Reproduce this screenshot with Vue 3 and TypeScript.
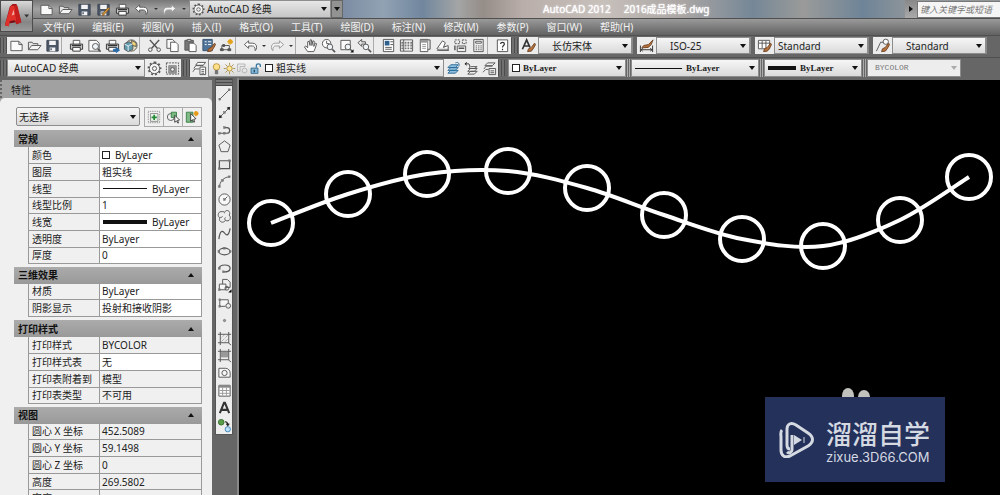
<script setup lang="ts">
interface Row { name: string; value: string; mark?: 'swatch' | 'thin' | 'thick'; locked?: boolean }
interface Section { title: string; rows: Row[] }
interface Point { x: number; y: number }

const page = '<path fill="#fafafa" d="M2 3.500h8.500l3.500 3.500v6.500H2z"/><path d="M10.500 3.500V7H14"/>'
const folder = '<path fill="#e4e4e4" d="M1.500 12.500V4.500h4l1 1.500h5v2"/><path fill="#f5f5f5" d="M1.500 12.500L5 8h10l-3.500 4.500z"/>'
const floppy = '<path fill="#4b5666" stroke="#3c4552" d="M2 2.500h12v11.500H2z"/><path fill="#f4f4f4" stroke="none" d="M4.500 3h7v4.500h-7zM5 10h6v4H5z"/><path stroke="#4b5666" stroke-width="1.500" d="M6.500 11v2"/>'
const printer = '<path fill="#fff" d="M4.500 6.500v-4h7v4"/><path fill="#cfcfcf" stroke="#333" d="M1.500 6.500h13v5.500h-13z"/><path fill="#fff" stroke="#333" d="M4 10h8v4H4z"/><path stroke="#333" stroke-width="1.500" d="M3 8h10"/>'
const undo = '<path fill="#fff" d="M1.500 7L6 3v2.500h4c3 0 4.500 2 4.500 4.500 0 1.500-.5 2.500-1.500 3.500C13 10 12 8.500 10 8.500H6V11z"/>'
const redo = '<path fill="#f4f4f4" stroke="#999" d="M14.500 7L10 3v2.500H6C3 5.500 1.500 7.500 1.500 10c0 1.500.5 2.500 1.500 3.500C3 10 4 8.500 6 8.500h4V11z"/>'
const gear = '<circle cx="8" cy="8" r="5.500" fill="#f3f3f3"/><circle cx="8" cy="8" r="2.200"/><path stroke-width="1.800" stroke-dasharray="2 2.300" d="M8 1.500a6.500 6.500 0 1 1 0 13a6.500 6.500 0 1 1 0-13"/>'
const brush = '<path fill="#b7713a" stroke="#704528" d="M14.500 5.500L11 10l-3 1.500-1 3 4-.5 2-2.500 2.500-4.500z"/>'
const lens = '<circle cx="9" cy="9" r="3.200" fill="#eef4f8"/><path stroke-width="1.800" d="M11.500 11.500l3 3"/>'
const layers = '<path fill="#eee" d="M2 12l3-4h9l-3 4zM2 9l3-4h9l-3 4zM3 6l3-4h8l-3 4z"/>'
const nodeDot = (x: number, y: number) => `<rect x="${x - 1}" y="${y - 1}" width="2" height="2" fill="#777" stroke="#777" stroke-width=".5"/>`

const icons: Record<string, string> = {
  page, folder, floppy, printer, undo, redo, gear,
  saveAs: floppy + '<path fill="#e0a33c" stroke="#8a5a20" d="M14.500 7L9 13l-2 2 .5-3L13 6z"/>',
  preview: '<path fill="#fafafa" d="M2 2.500h8l3 3v8.500H2z"/>' + lens,
  publish: printer + '<path fill="#2b6ca8" stroke="#2b6ca8" d="M9 12h3v-2l3.500 3-3.500 2.500V14H9z"/>',
  cube: '<circle cx="9" cy="8" r="6" fill="#e9e4c8"/><path fill="#5c9bb0" d="M1.500 6l5-2 4 2v6l-5 2.500-4-2.500z"/><path fill="#f1d372" d="M9 2.500l5 2.500v4l-4-1z"/><path stroke="#eee" d="M1.500 6.500l4 2 5-2.500M5.500 8.500V14"/>',
  cut: '<path stroke-width="1.600" d="M3 2l8 9M13 2L5 11"/><circle cx="3.500" cy="12.500" r="1.900"/><circle cx="12.500" cy="12.500" r="1.900"/>',
  copy: '<path fill="#f7f7f7" d="M2 1.500h6l2 2V11H2z"/><path fill="#fff" d="M6 4.500h5.500l2.500 2.500v7.500H6z"/>',
  paste: '<path fill="#777" d="M2 2.500h9V13H2z"/><path fill="#ddd" d="M4.500 1.500h4v2h-4z"/><path fill="#fff" d="M6.500 5.500h5L14 8v6.500H6.500z"/>',
  match: '<path fill="#4f7499" stroke="#34506e" d="M2 1.500h10v12H2z"/><path stroke="#fff" d="M4 4h2M7.500 4H11M4 7h2M7.500 7H11"/>' + brush,
  block: '<path d="M3 12.500V8h8v4.500z"/><path fill="#555" d="M1.500 11.500h3v2h-3zM9.500 11.500h3v2h-3zM4 7h2v2H4z"/><path stroke="#e3a21a" stroke-width="1.500" d="M12 1v6M9 4h6M10 2l4 4M14 2l-4 4"/>',
  pan: '<path fill="#fff" d="M5 14.500L1.500 9.500 3 8.500l2 2V4l1.500-.5L7.500 8V2L9 2l.5 6 1-5 1.500.5-.5 5.500 1.500-3.500 1.500.5-1.500 5-1.500 3.500z"/>',
  zoomTime: '<circle cx="6" cy="6" r="4.500" fill="#fff"/><path d="M6 3v3h3"/><circle cx="9.500" cy="9.500" r="3" fill="#eef4f8"/><path stroke-width="1.800" d="M12 12l3 3"/>',
  zoomWin: '<path fill="#fafafa" d="M2 2.500h10v10H2z"/><circle cx="9.500" cy="9.500" r="3" fill="#eef4f8"/><path stroke-width="1.500" d="M12 12l2 2"/><path fill="#111" stroke="none" d="M15.500 12v3.500H12z"/>',
  zoomPrev: '<path fill="#e5e5e5" d="M1 5l4-3.500V4h4v2.500H5V9z"/><circle cx="9.500" cy="9.500" r="3" fill="#eef4f8"/><path stroke-width="1.800" d="M12 12l3 3"/>',
  props: '<path fill="#fff" d="M2.500 1.500h11v13h-11z"/><path fill="#2d608e" stroke="none" d="M4 3h5v5H4z"/><path d="M10 4h3M10 7h3M4.500 10h7M4.500 12h7"/>',
  center: '<path fill="#fff" d="M1.500 2h13v12h-13z"/><path d="M5 2v12"/><path stroke-width="2" stroke="#777" stroke-dasharray="2 1" d="M6 5h8M6 8h8M6 11h8M2.500 5h2M2.500 8h2M2.500 11h2"/>',
  palette: '<path fill="#fff" d="M3.500 1.500h8v13h-8z"/><path fill="#ddd" d="M11.500 2H14v10h-2.500"/><path fill="#999" stroke="none" d="M4 2h7v3H4z"/><path stroke="#999" d="M5.500 7h4M5.500 9h4M5.500 11h4"/>',
  sheet: '<path fill="#ddd" d="M2 11l4-2 8 1v3H4z"/><path fill="#fff" d="M3 10l5-7 3 2-2 5 5-2v3"/><path d="M2 13h13"/>',
  markup: '<path stroke-dasharray="2 1" d="M2 2h5v4H2zM10 2h4v4h-4z"/><path fill="#eee" d="M4.500 8.500h9v6h-9z"/><path stroke-width="1.500" d="M6 11h6M2 8v5"/>',
  calc: '<path fill="#eee" d="M3 1.500h10v13H3z"/><path fill="#fff" d="M5 3.500h6v2H5z"/><path stroke="#888" stroke-width="1.300" stroke-dasharray="1.500 1" d="M5 8.500h7M5 10.500h7M5 12.500h7"/>',
  help: '<path fill="#fff" d="M2.500 2h11v12.500h-11z"/><path stroke="#333" stroke-width="1.300" d="M6 6.500C6 4 10 4 10 6.500 10 8 8 8 8 10M8 11.500V13"/>',
  textStyle: '<path stroke="#333" stroke-width="1.800" d="M1.500 12L6 2l3.500 8M3.500 8.500h5"/>' + brush,
  dimStyle: '<path stroke="#333" d="M1.500 8v7M14.500 8v7M2 12.500h12M4 11l-2 1.500L4 14M12 11l2 1.500L12 14"/><path fill="#b7713a" stroke="#704528" d="M15 2l-5 5-5 1-2 2.500 7-.5 3-3z"/>',
  tableStyle: '<path fill="#fff" d="M1.500 2.500h12v9h-12zM1.500 5.500h12M5.500 3v8M9.500 3v8"/>' + brush,
  leaderStyle: '<path d="M1.500 14L6 4.500h3"/><circle cx="11.500" cy="4" r="2.800" fill="#fff"/>' + brush,
  wsGear: gear,
  wsSave: '<path stroke-dasharray="2 1" d="M1.500 2h13v12h-13z"/><path fill="#999" stroke="#888" d="M4 5h8v8H4z"/><circle cx="8" cy="9" r="2" fill="#eee"/>',
  layerProps: '<path fill="#fff" d="M4 4.500L6 1.500h8.500L12 4.500zM2 8l2-3h8M1 11.500l2-3h5M8.500 6.500h6v8h-6z"/><path d="M10 9h3M10 11h3M10 13h3"/>',
  bulb: '<circle cx="8" cy="6" r="4" fill="#ffe08a" stroke="#b58a2c"/><path fill="#777" stroke="#666" d="M6.500 10.500h3v4h-3z"/>',
  sun: '<circle cx="8" cy="8" r="3.300" fill="#ffe795" stroke="#a18233"/><path stroke="#a18233" d="M8 1v2.500M8 12.500V15M1 8h2.500M12.500 8H15M3 3l2 2M11 11l2 2M13 3l-2 2M5 11l-2 2"/>',
  viewport: '<path stroke="#aaa" fill="#eee" d="M2 2.500h9v3H5v6H2z"/><circle cx="10.500" cy="10.500" r="3" stroke="#aaa"/>',
  lock: '<path stroke="#37769e" stroke-width="1.500" d="M9 7V4.500C9 1.500 14 1.500 14 4.500V6"/><path fill="#83b5d3" stroke="#2d6389" d="M2.500 7.500h8.500v6.500H2.500z"/><path stroke="#1c4763" stroke-width="1.500" d="M6.500 9.500v3"/>',
  layerCur: '<path fill="#8fc0e0" stroke="#2c6a96" d="M2 13l3-3h8l-3 3zM2 10l3-3h8l-3 3zM2 7l3-3h8l-3 3z"/><path stroke="#2c6a96" d="M10 2c3-1.500 5 1 3.500 4"/>',
  layerPrev: '<path fill="#eee" d="M4 14l3-3h7l-3 3zM4 11l3-3h7l-3 3zM5 8l2-2h7l-3 2z"/><path stroke="#222" d="M1 3h3c2 0 2 1 2 3M1 3l2-1.500M1 3l2 1.500"/>',
  layerState: '<path fill="#eee" d="M3 5l3-3h8l-3 3zM2 8.500l2.500-3H11M1 12l3-3h3M7.500 8h7v6.500h-7z"/><path d="M9 10.500h4M9 12.500h4"/>',
  quick: '<path stroke="#777" stroke-dasharray="1 1" d="M1.500 1.500h13v13h-13z"/><path fill="#e9f4e9" stroke="#888" d="M4 4h8.500v9H4z"/><path stroke="#238a37" stroke-width="2" d="M8.200 5.500v6M5.200 8.500h6"/>',
  pick: '<circle cx="5.500" cy="8" r="4"/><path fill="#79b982" stroke="#367c43" d="M6 2.500h6v6H6z"/><path fill="#fff" stroke="#333" d="M10 6v8l2-1.500 1.500 2.500 1-.5L13 12l2.500-.5z"/>',
  filter: '<path fill="#7fb986" stroke="#367c43" d="M1.500 2.500H9V14H1.500z"/><path fill="#fff" stroke="#333" d="M6.500 4v9l2-2 1.500 3 1-.5-1-3 2.500-.5z"/><path stroke="#e59a18" stroke-width="1.500" d="M12.500 1v6M10 4h5.500M11 2l3.500 4M14.500 2L11 6"/>',
}

const drawTools: { id: string; label: string; art: string }[] = [
  { id: 'line', label: '直线', art: '<path d="M3 13L13 3"/>' + nodeDot(3, 13) + nodeDot(13, 3) },
  { id: 'xline', label: '构造线', art: '<path d="M2.500 13.500l11-11"/><path fill="#222" stroke="#222" d="M13.500 2.500l-2.500.5 2 2zM2.500 13.500l2.500-.5-2-2z"/>' + nodeDot(8, 8) },
  { id: 'pline', label: '多段线', art: '<path stroke-width="1.300" d="M2.500 12h8c4 0 4-6 0-6H8"/>' + nodeDot(2.500, 12) + nodeDot(8, 6) + nodeDot(8, 12) },
  { id: 'polygon', label: '多边形', art: '<path fill="#eee" d="M8 2l6 4.500-2.300 7H4.300L2 6.500z"/>' },
  { id: 'rect', label: '矩形', art: '<path fill="#e8e8e8" stroke-width="1.300" d="M2.500 4h11v8.500h-11z"/>' + nodeDot(2.500, 12.500) + nodeDot(13.500, 4) },
  { id: 'arc', label: '圆弧', art: '<path d="M2.500 14C3 8 7 3.500 13 3"/>' + nodeDot(2.500, 13.500) + nodeDot(6, 7) + nodeDot(13, 3) },
  { id: 'circle', label: '圆', art: '<circle cx="8" cy="8" r="6" fill="#f7f7f7"/><path d="M8 8l3-3"/>' + nodeDot(8, 8) },
  { id: 'cloud', label: '修订云线', art: '<path d="M8 3.500C10-.5 15.500 2.500 13 6.500c3 3 0 8-4 5.500-2 4-8 1.500-6-2.500C-.5 7 2 1.500 5.500 3 6.500 2 8 3 8 4.500M9 12c-1-1-1-2 0-3M6 8C5 9 4 9 3 9"/>' },
  { id: 'spline', label: '样条曲线', art: '<path stroke-width="1.300" d="M2 14C3.500 2 7 6 8.500 8s4 3 5.500-5.500"/>' },
  { id: 'ellipse', label: '椭圆', art: '<ellipse cx="8" cy="8" rx="6" ry="3.500" stroke-width="1.300"/>' + nodeDot(2, 8) + nodeDot(14, 8) + nodeDot(8, 4.500) },
  { id: 'earc', label: '椭圆弧', art: '<path stroke-width="1.300" d="M2 8c1-5 12-5 12 0 0 3-4 4-7 3.500"/>' + nodeDot(7, 11.500) + nodeDot(2.500, 8) },
  { id: 'insert', label: '插入块', art: '<path fill="#eee" d="M6 1.500h5l3 3V10H6z"/><path fill="#f7f7f7" d="M2.500 12.500v-6h7v6z"/><circle cx="10.500" cy="11" r="2"/>' + nodeDot(2.500, 12.500) + '<path fill="#000" stroke="none" d="M15.500 12v3.500H12z"/>' },
  { id: 'make', label: '创建块', art: '<path fill="#f7f7f7" d="M3 11V4h9v4M3 11h6"/><circle cx="12" cy="10.500" r="2.500"/>' + nodeDot(3, 11) + nodeDot(3, 4) },
  { id: 'point', label: '点', art: '<circle cx="8" cy="8" r="1.200" fill="#999" stroke="#777"/>' },
  { id: 'hatch', label: '图案填充', art: '<path stroke="#888" stroke-dasharray="1 1" d="M4 8l4-4M4 12l8-8M8 12l4-4"/><path d="M3.500 1v14M12.500 1v12M1 3.500h14M1 12.500h11l3 2.500"/>' },
  { id: 'gradient', label: '渐变色', art: '<path fill="#999" stroke="none" d="M4 4h8v6H4z"/><path d="M3.500 1v14M12.500 1v12M1 3.500h14M1 12.500h11l3 2.500"/>' },
  { id: 'region', label: '面域', art: '<path fill="#f7f7f7" d="M2 13V3.500h7c3 0 5 2.500 5 5V13z"/><circle cx="8" cy="8.500" r="2.800"/>' },
  { id: 'table', label: '表格', art: '<path fill="#fff" d="M2 2.500h12v11.500H2z"/><path fill="#888" stroke="none" d="M2 2h12v3H2z"/><path stroke="#999" d="M2.500 8h11M2.500 11h11M6 5v8.500M10 5v8.500"/>' },
  { id: 'mtext', label: '多行文字', art: '<path stroke="#333" stroke-width="2.200" d="M3 14L7.500 3h1L13 14M4.500 10.500h7"/>' },
  { id: 'addsel', label: '添加选定对象', art: '<circle cx="4.500" cy="4.500" r="3" fill="#5a9e4b" stroke="#3a7030"/><circle cx="11.500" cy="12" r="2.800" fill="#bfe0f7" stroke="#3c86bd"/><path stroke="#222" stroke-width="1.300" d="M8.500 4c2 0 3 1 3 3.500M10 6l1.500 2L13 6"/>' },
]

const menus = ['文件(F)', '编辑(E)', '视图(V)', '插入(I)', '格式(O)', '工具(T)', '绘图(D)', '标注(N)', '修改(M)', '参数(P)', '窗口(W)', '帮助(H)']
const quickTools = ['page', 'folder', 'floppy', 'saveAs', 'printer', 'undo', 'caret', 'redo', 'caret']
const standardGroups = [
  ['page', 'folder', 'floppy'],
  ['printer', 'preview', 'publish', 'cube'],
  ['cut', 'copy', 'paste', 'match', 'block'],
  ['undo', 'caret', 'redo', 'caret'],
  ['pan', 'zoomTime', 'zoomWin', 'zoomPrev'],
  ['props', 'center', 'palette', 'sheet', 'markup', 'calc'],
  ['help'],
]
const styleBoxes = [
  { icon: 'textStyle', label: '文字样式', value: '长仿宋体', indent: 'far' },
  { icon: 'dimStyle', label: '标注样式', value: 'ISO-25', indent: 'far' },
  { icon: 'tableStyle', label: '表格样式', value: 'Standard', indent: 'near' },
  { icon: 'leaderStyle', label: '多重引线样式', value: 'Standard', indent: 'far' },
]

const sections: Section[] = [
  { title: '常规', rows: [
    { name: '颜色', value: 'ByLayer', mark: 'swatch' },
    { name: '图层', value: '粗实线' },
    { name: '线型', value: 'ByLayer', mark: 'thin' },
    { name: '线型比例', value: '1' },
    { name: '线宽', value: 'ByLayer', mark: 'thick' },
    { name: '透明度', value: 'ByLayer' },
    { name: '厚度', value: '0' },
  ] },
  { title: '三维效果', rows: [
    { name: '材质', value: 'ByLayer' },
    { name: '阴影显示', value: '投射和接收阴影' },
  ] },
  { title: '打印样式', rows: [
    { name: '打印样式', value: 'BYCOLOR', locked: true },
    { name: '打印样式表', value: '无' },
    { name: '打印表附着到', value: '模型', locked: true },
    { name: '打印表类型', value: '不可用', locked: true },
  ] },
  { title: '视图', rows: [
    { name: '圆心 X 坐标', value: '452.5089', locked: true },
    { name: '圆心 Y 坐标', value: '59.1498', locked: true },
    { name: '圆心 Z 坐标', value: '0', locked: true },
    { name: '高度', value: '269.5802', locked: true },
    { name: '宽度', value: '', locked: true },
  ] },
]

const nodes: Point[] = [
  { x: 32, y: 143 }, { x: 109, y: 114 }, { x: 188, y: 94 }, { x: 269, y: 91 }, { x: 348, y: 108 },
  { x: 425, y: 135 }, { x: 503, y: 159 }, { x: 584, y: 166 }, { x: 661, y: 140 }, { x: 730, y: 97 },
]

/* Catmull-Rom spline through the points, written as cubic segments. */
function splinePath(pts: Point[]): string {
  let d = `M${pts[0].x} ${pts[0].y}`
  for (let i = 0; i < pts.length - 1; i++) {
    const a = pts[Math.max(i - 1, 0)]
    const b = pts[i]
    const c = pts[i + 1]
    const e = pts[Math.min(i + 2, pts.length - 1)]
    d += ` C${b.x + (c.x - a.x) / 6} ${b.y + (c.y - a.y) / 6} ${c.x - (e.x - b.x) / 6} ${c.y - (e.y - b.y) / 6} ${c.x} ${c.y}`
  }
  return d
}
const curve = splinePath(nodes)
</script>

<template>
  <div class="app">
    <header class="top">
      <button class="logo" aria-label="应用程序菜单">
        <svg viewBox="0 0 32 31">
          <path fill="#a01318" d="M4 25L9 6l3-3h4l5 19-5 2-2-4-5 1-1 5z" />
          <path fill="#e0302a" d="M4 25L10 5h4l2 17-2-2-5 1-1 5z" />
          <path fill="#c41d1d" d="M14 4l3 1 4 17-5 2z" />
          <path fill="#f4aaa4" d="M11 15l2-6 1 5z" />
          <path fill="#7a0d10" d="M9 21l5-1 1 2-6 1z" />
          <path fill="#333" d="M24 14h5l-2.500 3z" />
        </svg>
      </button>
      <div class="top-rows">
        <div class="titlebar">
          <div class="quick">
            <template v-for="(q, i) in quickTools" :key="i">
              <button v-if="q === 'caret'" class="caret" aria-label="更多"></button>
              <button v-else class="tool" :aria-label="q"><svg viewBox="0 0 16 16" v-html="icons[q]"></svg></button>
            </template>
          </div>
          <label class="combo workspace">
            <svg class="ico" viewBox="0 0 16 16" v-html="icons.gear"></svg>
            <select aria-label="工作空间"><option>AutoCAD 经典</option></select>
          </label>
          <button class="more" aria-label="自定义快速访问工具栏"></button>
          <h1 class="title"><span>AutoCAD 2012</span><span>2016成品模板.dwg</span></h1>
          <button class="reveal" aria-label="展开搜索"></button>
          <input class="search" type="text" aria-label="搜索" placeholder="键入关键字或短语">
        </div>
        <nav class="menubar">
          <button v-for="m in menus" :key="m">{{ m }}</button>
        </nav>
      </div>
    </header>

    <div class="bar">
      <i class="grip"></i>
      <div class="strip standard">
        <div v-for="(g, gi) in standardGroups" :key="gi" class="group">
          <template v-for="(q, i) in g" :key="i">
            <button v-if="q === 'caret'" class="caret" aria-label="更多"></button>
            <button v-else class="tool" :aria-label="q"><svg viewBox="0 0 16 16" v-html="icons[q]"></svg></button>
          </template>
        </div>
      </div>
      <i class="grip wide"></i>
      <div v-for="s in styleBoxes" :key="s.icon" class="strip style-box">
        <button class="tool" :aria-label="s.label"><svg viewBox="0 0 16 16" v-html="icons[s.icon]"></svg></button>
        <label class="combo" :class="s.indent">
          <select :aria-label="s.label"><option>{{ s.value }}</option></select>
        </label>
      </div>
    </div>

    <div class="bar second">
      <i class="grip"></i>
      <div class="strip">
        <label class="combo ws"><select aria-label="当前工作空间"><option>AutoCAD 经典</option></select></label>
        <button class="tool" aria-label="工作空间设置"><svg viewBox="0 0 16 16" v-html="icons.wsGear"></svg></button>
        <button class="tool" aria-label="我的工作空间"><svg viewBox="0 0 16 16" v-html="icons.wsSave"></svg></button>
      </div>
      <i class="grip spaced"></i>
      <div class="strip">
        <button class="tool" aria-label="图层特性"><svg viewBox="0 0 16 16" v-html="icons.layerProps"></svg></button>
        <label class="combo layer">
          <svg v-for="n in ['bulb', 'sun', 'viewport', 'lock']" :key="n" class="ico" viewBox="0 0 16 16" v-html="icons[n]"></svg>
          <i class="swatch"></i>
          <select aria-label="图层"><option>粗实线</option></select>
        </label>
        <button v-for="n in ['layerCur', 'layerPrev', 'layerState']" :key="n" class="tool" :aria-label="n">
          <svg viewBox="0 0 16 16" v-html="icons[n]"></svg>
        </button>
      </div>
      <i class="grip"></i>
      <label class="combo serif color"><i class="swatch"></i><select aria-label="颜色控制"><option>ByLayer</option></select></label>
      <i class="sep"></i>
      <label class="combo serif ltype"><i class="rule thin"></i><select aria-label="线型控制"><option>ByLayer</option></select></label>
      <i class="sep"></i>
      <label class="combo serif weight"><i class="rule thick"></i><select aria-label="线宽控制"><option>ByLayer</option></select></label>
      <i class="sep"></i>
      <label class="combo plot"><select aria-label="打印样式控制" disabled><option>BYCOLOR</option></select></label>
    </div>

    <main class="work">
      <aside class="palette">
        <h2>特性</h2>
        <div class="palette-body">
          <div class="selector">
            <label class="combo"><select aria-label="选择对象类型"><option>无选择</option></select></label>
            <div class="pick-buttons">
              <button v-for="n in ['quick', 'pick', 'filter']" :key="n" :aria-label="n">
                <svg viewBox="0 0 16 16" v-html="icons[n]"></svg>
              </button>
            </div>
          </div>
          <section v-for="s in sections" :key="s.title">
            <h3><button>{{ s.title }}</button></h3>
            <table>
              <tbody>
                <tr v-for="r in s.rows" :key="r.name">
                  <th scope="row">{{ r.name }}</th>
                  <td :class="{ locked: r.locked }">
                    <div class="value">
                      <i v-if="r.mark === 'swatch'" class="swatch"></i>
                      <i v-else-if="r.mark" class="rule" :class="r.mark"></i>
                      <span>{{ r.value }}</span>
                    </div>
                  </td>
                </tr>
              </tbody>
            </table>
          </section>
        </div>
      </aside>

      <div class="draw-dock">
        <div class="draw-bar">
          <i class="hgrip"></i>
          <div class="draw-tools">
            <button v-for="t in drawTools" :key="t.id" :aria-label="t.label">
              <svg viewBox="0 0 16 16" v-html="t.art"></svg>
            </button>
          </div>
        </div>
      </div>

      <div class="canvas">
        <svg class="drawing" viewBox="0 0 761 415" preserveAspectRatio="xMinYMin meet">
          <path :d="curve" />
          <circle v-for="(n, i) in nodes" :key="i" :cx="n.x" :cy="n.y" r="22" />
        </svg>
        <div class="watermark">
          <svg class="ears" viewBox="0 0 32 9"><ellipse cx="7" cy="8" rx="6" ry="8" /><ellipse cx="23" cy="9" rx="6" ry="7" /></svg>
          <svg class="mark" viewBox="0 0 36 36">
            <path d="M8 30a3 3 0 0 0 5-2V13" />
            <path d="M3 8C1 10 2 13 2 15v13c0 6 4 8 9 6l18-10c6-4 6-9 0-13L17 3C12 0 8 2 8 7v16c0 3 1 4 3 4" />
            <path class="solid" d="M15 13l8 5-8 5z" />
            <path class="fine" d="M25 15v6" />
          </svg>
          <div class="brand"><strong>溜溜自学</strong><span>zixue.3D66.COM</span></div>
        </div>
      </div>
    </main>
  </div>
</template>

<style>
html, body, #app { height: 100%; }
body { margin: 0; overflow: hidden; }
</style>

<style scoped>
.app {
  --face: "Noto Sans", "Noto Sans CJK SC", sans-serif;
  height: 100%;
  display: flex;
  flex-direction: column;
  overflow: hidden;
  background: #666;
  color: #222;
  font: 10px/14px var(--face);
}
.app * { box-sizing: border-box; }
button { margin: 0; padding: 0; border: 0; background: none; color: inherit; font: inherit; }
svg { display: block; fill: none; stroke: #555; stroke-width: 1; }
h1, h2, h3 { margin: 0; font: inherit; }

.top { flex: none; display: flex; height: 35px; background: linear-gradient(#5f5f5f 0, #929292 54%, #999 55%, #626262); }
.logo { width: 33px; height: 32px; border: 1px solid #4c4c4c; background: linear-gradient(#d9d9d9, #858585 70%, #9c9c9c); }
.logo svg { width: 31px; height: 30px; stroke: none; }
.top-rows { flex: 1; min-width: 0; display: flex; flex-direction: column; }
.titlebar {
  display: flex;
  height: 19px;
  border-bottom: 1px solid #505050;
  background: linear-gradient(90deg, #7c8da3 310px, #91a2b3 350px, #71879e 390px, #a3a5a5 425px, #958d88 450px, #b9aeaa 490px, #c7c0bb 570px, #aaa5a3 650px, #758797 720px, #9a9b99 770px, #6e8498 830px, #92979a 880px);
}
.quick { display: flex; align-items: center; width: 156px; padding-left: 4px; background: linear-gradient(#777, #a2a2a2 50%, #858585); }
.tool { flex: none; width: 18px; display: flex; justify-content: center; align-items: center; }
.tool svg { width: 15px; height: 15px; }
.quick .tool { width: 19px; }
.caret { flex: none; width: 9px; display: flex; justify-content: center; align-items: center; }
.caret::before { content: ""; border: 2px solid transparent; border-top-color: #333; border-bottom: 0; }
.combo {
  flex: none;
  display: flex;
  align-items: center;
  padding: 0 3px 0 7px;
  border: 1px solid #8d8d8d;
  background: linear-gradient(#f6f6f6, #dadada);
}
.combo::after { content: ""; flex: none; border: 3px solid transparent; border-top: 4px solid #111; border-bottom: 0; pointer-events: none; }
select { flex: 1; min-width: 0; appearance: none; margin: 0; padding: 0; border: 0; background: transparent; color: #222; font: inherit; }
.ico { flex: none; width: 13px; height: 13px; }
.workspace { width: 142px; padding-left: 2px; background: linear-gradient(#e6e6e6, #c6c6c6); }
.workspace .ico { margin-right: 2px; }
.more { width: 12px; display: flex; justify-content: center; align-items: center; border: 1px solid #666; background: #929292; }
.more::before { content: ""; border: 3px solid transparent; border-top: 4px solid #111; border-bottom: 0; }
.title { flex: 1; display: flex; gap: 13px; padding-left: 200px; align-items: center; color: #fff; text-shadow: 0 0 1px #fff, 0 0 3px #fff8; white-space: nowrap; }
.reveal { width: 12px; display: flex; justify-content: center; align-items: center; background: linear-gradient(#888, #aaa); }
.reveal::before { content: ""; border: 3px solid transparent; border-left: 4px solid #111; border-right: 0; }
.search { width: 83px; height: 17px; align-self: center; padding: 0 2px; border: 1px solid #777; border-right: 0; background: #f5f5f5; font: italic 9px/14px var(--face); }
.search::placeholder { color: #777; opacity: 1; }
.menubar { display: flex; gap: 18px; padding-left: 10px; height: 16px; color: #f2f2f2; white-space: nowrap; }

.bar { flex: none; display: flex; height: 20px; padding: 1px 0; border-top: 1px solid #505050; background: #666; }
.second { height: 21px; margin-top: 2px; }
.grip { flex: none; width: 7px; margin: 1px 0; background: repeating-linear-gradient(90deg, #4c4c4c 0 1px, #707070 1px 3px); }
.grip.wide { width: 8px; }
.grip.spaced { margin-left: 2px; }
.strip { flex: none; display: flex; align-items: stretch; background: #ececec; }
.group { display: flex; }
.group + .group { padding-left: 5px; border-left: 1px solid #aaa; }
.style-box { border-right: 1px solid #888; }
.style-box .combo { width: 94px; padding-left: 3px; }
.style-box .combo.far { padding-left: 13px; }
.style-box .tool { width: 19px; }
.style-box + .style-box { margin-left: 4px; }
.ws { width: 138px; padding-left: 6px; }
.layer { width: 236px; padding-left: 1px; }
.swatch { flex: none; width: 8px; height: 8px; border: 1px solid #222; background: #fff; }
.layer .swatch { margin: 0 3px; }
.rule { flex: none; background: #111; }
.thin { height: 1px; }
.thick { height: 4px; }
.serif { font: bold 9px/14px "Liberation Serif", serif; padding-left: 3px; }
.color { width: 118px; margin-left: 3px; }
.color .swatch { margin-right: 3px; }
.sep { flex: none; width: 3px; margin: 0 1px; border: 1px solid #aaa; border-width: 0 1px; }
.ltype { width: 128px; }
.ltype .rule { width: 47px; margin-right: 4px; }
.weight { width: 98px; }
.weight .rule { width: 28px; margin-right: 4px; }
.plot { width: 94px; background: #ededed; font: 8px/14px "Liberation Mono", monospace; }
.plot select { color: #777; opacity: 1; }
.plot::after { border-top-color: #aaa; }

.work { flex: 1; min-height: 0; display: flex; }
.palette { flex: none; width: 212px; display: flex; flex-direction: column; margin-top: 2px; background: #a1a1a1; }
.palette h2 { padding: 3px 0 1px 9px; border-left: 2px dotted #666; line-height: 14px; }
.palette-body { flex: 1; min-height: 0; overflow: hidden; padding: 9px 10px 0 14px; border-radius: 5px 5px 0 0; background: #f0f0f0; }
.selector { display: flex; gap: 4px; padding-left: 2px; margin-bottom: 3px; height: 20px; }
.selector .combo { flex: 1; height: 19px; padding-left: 2px; border-radius: 2px; }
.pick-buttons { display: flex; border: 1px solid #aaa; }
.pick-buttons button { width: 18px; display: flex; align-items: center; justify-content: center; }
.pick-buttons button + button { width: 19px; border-left: 1px solid #aaa; }
.pick-buttons svg { width: 14px; height: 14px; }
section { margin-bottom: 3px; }
h3 button { width: 100%; height: 17px; display: flex; align-items: center; justify-content: space-between; padding: 0 8px 0 4px; background: linear-gradient(#ababab, #999); font-weight: 700; color: #111; }
h3 button::after { content: ""; border: 3px solid transparent; border-bottom: 4px solid #111; border-top: 0; }
table { width: calc(100% - 14px); margin-left: 14px; border-collapse: collapse; table-layout: fixed; line-height: 12px; }
tr { height: 17px; }
tr:nth-child(3n + 1) { height: 16px; }
th, td { padding: 0 2px; border: 1px solid #999; text-align: left; font-weight: 400; white-space: nowrap; overflow: hidden; }
tr:first-child > * { border-top: 0; }
th { width: 71px; padding-left: 3px; }
td { background: #fff; }
td.locked { background: #f0f0f0; }
.value { display: flex; align-items: center; gap: 5px; }
.value .rule { width: 44px; margin-left: 1px; }

.draw-dock { flex: none; width: 27px; padding: 0 4px 0 3px; border-right: 2px solid #888; background: #666; }
.draw-bar { background: #ededed; border: 1px solid #555; }
.hgrip { display: block; height: 7px; background: repeating-linear-gradient(#484848 0 1px, #777 1px 3px); }
.draw-tools { height: 348px; display: flex; flex-direction: column; justify-content: space-around; align-items: center; }
.draw-tools svg { width: 15px; height: 15px; }

.canvas { position: relative; flex: 1; min-width: 0; margin-top: 2px; background: #000; }
.drawing { width: 100%; height: 100%; stroke: #fff; stroke-width: 4; }
.watermark { position: absolute; right: 55px; bottom: 13px; width: 180px; height: 85px; display: flex; align-items: center; gap: 11px; padding-left: 14px; background: #24315a; color: #d5d9e2; }
.ears { position: absolute; left: 76px; bottom: 100%; width: 32px; height: 9px; fill: #bfc2bd; stroke: none; }
.mark { flex: none; width: 36px; height: 36px; stroke: #d5d9e2; stroke-width: 3; }
.mark .solid { fill: #d5d9e2; stroke: none; }
.mark .fine { stroke-width: 1; }
.brand { display: flex; flex-direction: column; white-space: nowrap; }
.brand strong { font: 500 26px/34px "Noto Sans CJK SC", sans-serif; }
.brand span { font: 13px/14px Inter, sans-serif; }
</style>
